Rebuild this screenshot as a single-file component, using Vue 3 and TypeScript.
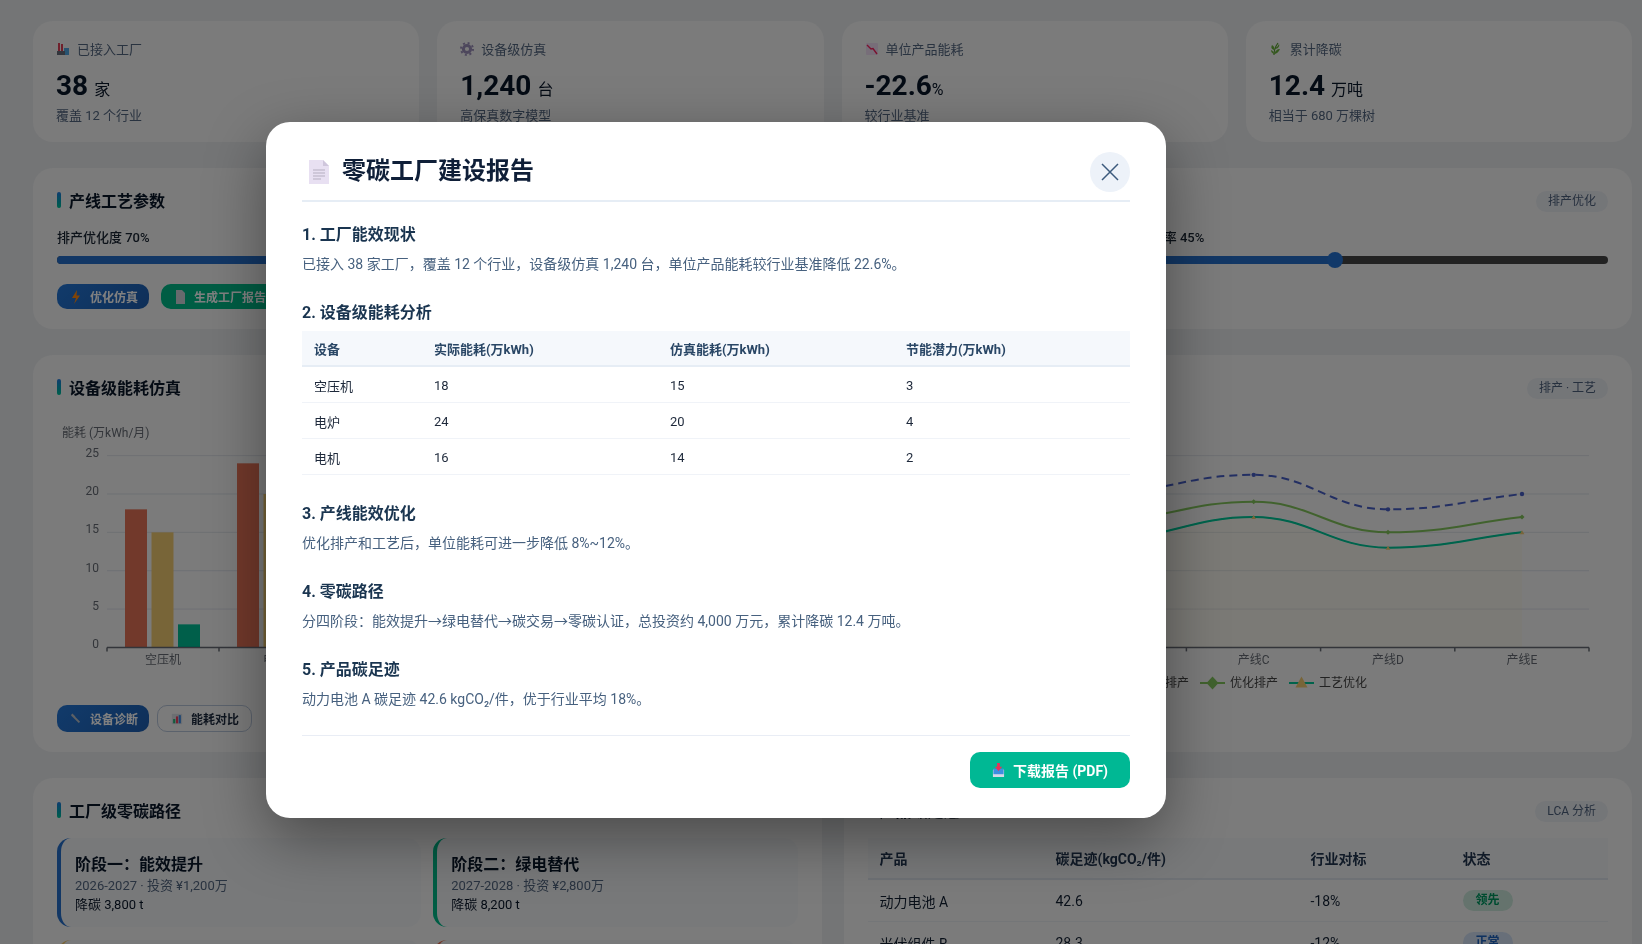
<script setup lang="ts">
interface Stat { label: string; value: string; unit: string; sub: string; icon: string; tight?: boolean }
const stats: Stat[] = [
  { label: '已接入工厂', value: '38', unit: '家', sub: '覆盖 12 个行业', icon: 'factory' },
  { label: '设备级仿真', value: '1,240', unit: '台', sub: '高保真数字模型', icon: 'gear' },
  { label: '单位产品能耗', value: '-22.6', unit: '%', sub: '较行业基准', icon: 'down', tight: true },
  { label: '累计降碳', value: '12.4', unit: '万吨', sub: '相当于 680 万棵树', icon: 'herb' },
]
const sliders = [
  { label: '排产优化度 70%', v: 70 },
  { label: '设备负载率 60%', v: 60 },
  { label: '余热回收率 45%', v: 45 },
]
const yTicks = [0, 5, 10, 15, 20, 25]
const Y0 = 223.4
const UNIT = 7.67
const yOf = (v: number) => Y0 - v * UNIT
const cats = [
  { n: '空压机', v: [18, 15, 3] },
  { n: '电炉', v: [24, 20, 4] },
  { n: '电机', v: [16, 14, 2] },
  { n: '风机', v: [12, 10, 2] },
  { n: '水泵', v: [10, 8, 2] },
  { n: '照明', v: [6, 5, 1] },
]
const barColors = ['#d8745c', '#ecca7c', '#00b894']
const lineNames = ['产线A', '产线B', '产线C', '产线D', '产线E']
const lineX = [117, 251.6, 385.7, 520, 654]
function smooth(vals: number[]): string {
  const pts = vals.map((v, i) => [lineX[i], yOf(v)])
  const slope = pts.map((p, i) => {
    if (i === 0) return (pts[1][1] - p[1]) / (pts[1][0] - p[0])
    if (i === pts.length - 1) return (p[1] - pts[i - 1][1]) / (p[0] - pts[i - 1][0])
    const a = p[1] - pts[i - 1][1]
    const b = pts[i + 1][1] - p[1]
    return a * b <= 0 ? 0 : (pts[i + 1][1] - pts[i - 1][1]) / (pts[i + 1][0] - pts[i - 1][0])
  })
  let d = `M${pts[0][0]} ${pts[0][1]}`
  for (let i = 0; i < pts.length - 1; i++) {
    const dx = (pts[i + 1][0] - pts[i][0]) * 0.42
    d += ` C${pts[i][0] + dx} ${pts[i][1] + slope[i] * dx} ${pts[i + 1][0] - dx} ${pts[i + 1][1] - slope[i + 1] * dx} ${pts[i + 1][0]} ${pts[i + 1][1]}`
  }
  return d
}
const s1 = [18, 20, 22.5, 18, 20]
const s2 = [15, 16.5, 19, 15, 17]
const s3 = [13, 14, 17, 13, 15]
const p1 = smooth(s1)
const p2 = smooth(s2)
const p3 = smooth(s3)
const area = `${p3} L654 ${Y0} L117 ${Y0} Z`
const stages = [
  { t: '阶段一：能效提升', s: '2026-2027 · 投资 ¥1,200万', c: '降碳 3,800 t', k: 'blue' },
  { t: '阶段二：绿电替代', s: '2027-2028 · 投资 ¥2,800万', c: '降碳 8,200 t', k: 'green' },
  { t: '阶段三：碳交易', s: '2028-2029 · 投资 ¥0万', c: '降碳 400 t', k: 'amber' },
  { t: '阶段四：零碳认证', s: '2029-2030', c: '降碳 0 t', k: 'red' },
]
const products = [
  { n: '动力电池 A', f: '42.6', b: '-18%', st: '领先', k: 'lead' },
  { n: '光伏组件 B', f: '28.3', b: '-12%', st: '正常', k: 'norm' },
]
const energy = [
  { n: '空压机', a: 18, s: 15, p: 3 },
  { n: '电炉', a: 24, s: 20, p: 4 },
  { n: '电机', a: 16, s: 14, p: 2 },
]
</script>

<template>
  <div class="page">
    <section class="stats">
      <div v-for="s in stats" :key="s.label" class="card stat">
        <div class="stat-label">
          <svg v-if="s.icon === 'factory'" class="ico" viewBox="0 0 14 14"><rect x="2" y="1" width="2" height="9" fill="#d0455a"/><rect x="5" y="2" width="2" height="8" fill="#d0455a"/><rect x="8" y="6" width="5" height="7" fill="#5aa4d8"/><rect x="1" y="9" width="8" height="4" fill="#666c78"/></svg>
          <svg v-else-if="s.icon === 'gear'" class="ico" viewBox="0 0 14 14"><circle cx="7" cy="7" r="3.6" fill="none" stroke="#9a8fb4" stroke-width="3"/><circle cx="7" cy="7" r="6" fill="none" stroke="#9a8fb4" stroke-width="2" stroke-dasharray="2 2.7"/></svg>
          <svg v-else-if="s.icon === 'down'" class="ico" viewBox="0 0 14 14"><rect x="1" y="1" width="12" height="12" rx="1" fill="#ecdcf0"/><path d="M2 3 L6 7 L8 6.5 L12 12" fill="none" stroke="#e0285a" stroke-width="1.4"/></svg>
          <svg v-else class="ico" viewBox="0 0 14 14"><path d="M5 13 C5 9 6 5 9 1" fill="none" stroke="#5d9a3c" stroke-width="1.2"/><path d="M5 8 C2 7 2 5 3 3 C5 4 6 6 5 8Z M6 6 C8 5 9 4 10 2 C11 4 9 7 6 7Z M5 12 C7 12 10 10 11 7 C8 7 6 9 5 12Z M5 12 C3 11 2 10 2 8 C4 9 5 10 5 12Z" fill="#6fae46"/></svg>
          <span>{{ s.label }}</span>
        </div>
        <div class="stat-value">{{ s.value }}<small :class="{ tight: s.tight }">{{ s.unit }}</small></div>
        <div class="stat-sub">{{ s.sub }}</div>
      </div>
    </section>

    <section class="card params">
      <div class="head">
        <h2 class="title">产线工艺参数</h2>
        <span class="badge">排产优化</span>
      </div>
      <div class="sliders">
        <div v-for="s in sliders" :key="s.label" class="slider">
          <div class="slider-label">{{ s.label }}</div>
          <div class="track">
            <div class="fill" :style="{ width: s.v + '%' }"><i class="thumb"></i></div>
          </div>
        </div>
      </div>
      <div class="actions">
        <button class="btn blue">
          <svg class="ico-s" viewBox="0 0 12 14"><path d="M7 0 L2 8 H6 L4 14 L10 5.5 H6.5Z" fill="#f58a1f"/></svg>优化仿真
        </button>
        <button class="btn green">
          <svg class="ico-s" viewBox="0 0 12 14"><path d="M2 0 H8 L11 3 V14 H2Z" fill="#cfd4da"/></svg>生成工厂报告
        </button>
      </div>
    </section>

    <section class="two">
      <div class="card chart-card">
        <div class="head"><h2 class="title">设备级能耗仿真</h2></div>
        <svg class="chart" viewBox="0 0 741 269" width="741" height="269">
          <text x="5" y="12.5" class="ax">能耗 (万kWh/月)</text>
          <g v-for="t in yTicks" :key="t">
            <line v-if="t" x1="50" :x2="722" :y1="yOf(t)" :y2="yOf(t)" class="grid" />
            <text x="42" :y="yOf(t) + 1" text-anchor="end" class="ax">{{ t }}</text>
          </g>
          <g v-for="(c, i) in cats" :key="c.n">
            <rect v-for="(v, j) in c.v" :key="j" :x="68 + i * 112 + j * 26.5" :y="yOf(v)" width="22" :height="v * UNIT" :fill="barColors[j]" />
            <line :x1="50 + i * 112" :x2="50 + i * 112" :y1="Y0" :y2="Y0 + 4" class="axis" />
            <text :x="106 + i * 112" y="240" text-anchor="middle" class="ax">{{ c.n }}</text>
          </g>
          <line x1="50" x2="722" :y1="Y0" :y2="Y0" class="axis" />
          <line x1="722" x2="722" :y1="Y0" :y2="Y0 + 4" class="axis" />
        </svg>
        <div class="actions">
          <button class="btn blue tall">
            <svg class="ico-s" viewBox="0 0 14 14"><path d="M2 2 L5 5 L11 11 M2 1.5 L5.5 5" fill="none" stroke="#b9bfc6" stroke-width="2.2"/></svg>设备诊断
          </button>
          <button class="btn outline tall">
            <svg class="ico-s" viewBox="0 0 14 14"><rect x="1" y="1" width="12" height="12" fill="#d8dde3"/><rect x="2.5" y="7" width="2.5" height="5" fill="#34b37e"/><rect x="5.8" y="4" width="2.5" height="8" fill="#e0455f"/><rect x="9" y="2.5" width="2.5" height="9.5" fill="#4088d8"/></svg>能耗对比
          </button>
        </div>
      </div>

      <div class="card chart-card">
        <div class="head">
          <h2 class="title">产线能效对比</h2>
          <span class="badge">排产 · 工艺</span>
        </div>
        <svg class="chart" viewBox="0 0 740 269" width="740" height="269">
          <line v-for="t in yTicks.slice(1)" :key="t" x1="50" x2="721" :y1="yOf(t)" :y2="yOf(t)" class="grid" />
          <path :d="area" fill="#ffe08a" fill-opacity="0.08" />
          <path :d="p1" fill="none" stroke="#4a5fb8" stroke-width="2" stroke-dasharray="8 5" />
          <path :d="p2" fill="none" stroke="#88c266" stroke-width="2" />
          <path :d="p3" fill="none" stroke="#00c096" stroke-width="2" />
          <g v-for="(x, i) in lineX" :key="x">
            <circle :cx="x" :cy="yOf(s1[i])" r="2.2" fill="#4a5fb8" />
            <path :d="`M${x} ${yOf(s2[i]) - 2.5} l2.5 2.5 l-2.5 2.5 l-2.5 -2.5Z`" fill="#88c266" />
            <path :d="`M${x} ${yOf(s3[i]) - 2} l2.4 4 h-4.8Z`" fill="#ecca7c" />
            <text :x="x" y="240" text-anchor="middle" class="ax">{{ lineNames[i] }}</text>
          </g>
          <line x1="50" x2="721" :y1="Y0" :y2="Y0" class="axis" />
          <line v-for="i in 6" :key="i" :x1="50 + (i - 1) * 134.2" :x2="50 + (i - 1) * 134.2" :y1="Y0" :y2="Y0 + 4" class="axis" />
          <g class="legend">
            <line x1="243" x2="268" y1="259" y2="259" stroke="#4a5fb8" stroke-width="2" />
            <text x="273" y="263" class="lg">当前排产</text>
            <line x1="332" x2="357" y1="259" y2="259" stroke="#88c266" stroke-width="2" />
            <path d="M344.5 252.5 l6 6.5 l-6 6.5 l-6 -6.5Z" fill="#88c266" />
            <text x="362" y="263" class="lg">优化排产</text>
            <line x1="421" x2="446" y1="259" y2="259" stroke="#00c096" stroke-width="2" />
            <path d="M433.5 252.5 l6 11 h-12Z" fill="#ecca7c" />
            <text x="451" y="263" class="lg">工艺优化</text>
          </g>
        </svg>
      </div>
    </section>

    <section class="two">
      <div class="card">
        <div class="head"><h2 class="title">工厂级零碳路径</h2></div>
        <div class="stages">
          <div v-for="s in stages" :key="s.t" class="stage" :class="s.k">
            <div class="stage-t">{{ s.t }}</div>
            <div class="stage-s">{{ s.s }}</div>
            <div class="stage-c">{{ s.c }}</div>
          </div>
        </div>
      </div>
      <div class="card">
        <div class="head">
          <h2 class="title">产品碳足迹</h2>
          <span class="badge">LCA 分析</span>
        </div>
        <table class="ptable">
          <thead>
            <tr><th class="c1">产品</th><th class="c2">碳足迹(kgCO₂/件)</th><th class="c3">行业对标</th><th>状态</th></tr>
          </thead>
          <tbody>
            <tr v-for="p in products" :key="p.n">
              <td>{{ p.n }}</td><td>{{ p.f }}</td><td>{{ p.b }}</td>
              <td><span class="tag" :class="p.k">{{ p.st }}</span></td>
            </tr>
          </tbody>
        </table>
      </div>
    </section>

    <div class="overlay">
      <div class="modal">
        <header class="m-head">
          <svg class="doc" viewBox="0 0 20 24"><path d="M0 0 H14 L20 6 V24 H0Z" fill="#e8e0f2"/><path d="M14 0 L20 6 H14Z" fill="#cfc6dc"/><path d="M4 10 H16 M4 13 H16 M4 16 H16 M4 19 H12" stroke="#b5aec0" stroke-width="1"/></svg>
          <h1>零碳工厂建设报告</h1>
          <button class="close" aria-label="关闭">
            <svg viewBox="0 0 18 18" width="18" height="18"><path d="M1 1 L17 17 M17 1 L1 17" stroke="#3b5a7d" stroke-width="1.5" fill="none"/></svg>
          </button>
        </header>

        <h3 class="first">1. 工厂能效现状</h3>
        <p>已接入 38 家工厂，覆盖 12 个行业，设备级仿真 1,240 台，单位产品能耗较行业基准降低 22.6%。</p>

        <h3>2. 设备级能耗分析</h3>
        <table class="rtable">
          <thead>
            <tr><th class="w1">设备</th><th>实际能耗(万kWh)</th><th>仿真能耗(万kWh)</th><th>节能潜力(万kWh)</th></tr>
          </thead>
          <tbody>
            <tr v-for="e in energy" :key="e.n"><td>{{ e.n }}</td><td>{{ e.a }}</td><td>{{ e.s }}</td><td>{{ e.p }}</td></tr>
          </tbody>
        </table>

        <h3>3. 产线能效优化</h3>
        <p>优化排产和工艺后，单位能耗可进一步降低 8%~12%。</p>

        <h3>4. 零碳路径</h3>
        <p>分四阶段：能效提升→绿电替代→碳交易→零碳认证，总投资约 4,000 万元，累计降碳 12.4 万吨。</p>

        <h3>5. 产品碳足迹</h3>
        <p>动力电池 A 碳足迹 42.6 kgCO₂/件，优于行业平均 18%。</p>

        <footer class="m-foot">
          <button class="dl">
            <svg class="dl-ico" viewBox="0 0 14 16"><path d="M1 7 H13 V15 H1Z" fill="#d5d8e8"/><path d="M1.5 6 H12.5 V12 H1.5Z" fill="#3d8fe0"/><path d="M5.5 0 H8.5 V4 H11 L7 8.5 L3 4 H5.5Z" fill="#e8305a"/></svg>
            下载报告 (PDF)
          </button>
        </footer>
      </div>
    </div>
  </div>
</template>

<style>
html, body { margin: 0; height: 100%; overflow: hidden; background: #e9eaec; }
</style>

<style scoped>
* { box-sizing: border-box; }
.page {
  height: 944px;
  overflow: hidden;
  padding: 21px 10px 0 33px;
  background: #e9eaec;
  font-family: Roboto, "Noto Sans CJK SC", sans-serif;
  color: #1e293b;
  display: flex;
  flex-direction: column;
  gap: 26px;
}
.card {
  background: #f6f6f6;
  border-radius: 20px;
  padding: 21px 24px 20px;
  flex: none;
}
.stats { display: grid; grid-template-columns: repeat(4, 1fr); gap: 18px; }
.stat { height: 121px; padding: 21px 23px 0; }
.stat-label { display: flex; align-items: center; gap: 7px; font-size: 13px; line-height: 13px; color: #55657c; }
.ico { width: 14px; height: 14px; flex: none; }
.stat-value { margin-top: 13px; font-size: 28px; line-height: 34px; font-weight: 700; color: #0a1526; }
.stat-value small { font-size: 16px; font-weight: 400; margin-left: 6px; }
.stat-value small.tight { margin-left: 0; }
.stat-sub { margin-top: 0; font-size: 13px; line-height: 18px; color: #55657c; }
.head { display: flex; align-items: center; justify-content: space-between; height: 22px; }
.title {
  margin: 0;
  font-size: 16px;
  font-weight: 700;
  color: #0a1526;
  display: flex;
  align-items: center;
  gap: 8px;
}
.title::before {
  content: "";
  width: 4px;
  height: 16px;
  border-radius: 2px;
  background: linear-gradient(180deg, #2a78d0, #00b894);
}
.badge { margin-top: 3px; font-size: 12px; line-height: 21px; padding: 0 12px; border-radius: 11px; background: #e9ebf0; color: #4f6078; }
.sliders { display: grid; grid-template-columns: repeat(3, 1fr); gap: 31px; margin-top: 18px; }
.slider-label { font-size: 13px; line-height: 18px; font-weight: 500; color: #1a2330; }
.track { margin-top: 9px; height: 8px; border-radius: 4px; background: #444; }
.fill { position: relative; height: 100%; border-radius: 4px; background: #2c6cbc; }
.thumb { position: absolute; right: -8px; top: -4px; width: 16px; height: 16px; border-radius: 50%; background: #2c70c4; }
.actions { display: flex; gap: 12px; margin-top: 20px; }
.btn {
  display: inline-flex;
  align-items: center;
  justify-content: center;
  gap: 8px;
  height: 25px;
  padding: 0 11px 0 13px;
  border: 0;
  border-radius: 10px;
  font: 700 12px Roboto, "Noto Sans CJK SC", sans-serif;
  color: #fff;
}
.btn.tall { height: 27px; }
.btn.blue { background: linear-gradient(135deg, #2c74c8, #245ca4); }
.btn.green { background: #00b488; }
.btn.outline { background: #f6f6f6; border: 1px solid #b8c3d6; color: #1e293b; padding: 0 12px 0 13px; }
.ico-s { width: 12px; height: 14px; flex: none; }
.two { display: grid; grid-template-columns: repeat(2, 1fr); gap: 22px; }
.chart-card { height: 397px; }
.chart { display: block; margin-top: 26px; }
.chart-card .actions { margin-top: 12px; gap: 8px; }
.ax { font-size: 12px; fill: #666a72; }
.lg { font-size: 12px; fill: #444; }
.grid { stroke: #dcdfe6; stroke-width: 1; }
.axis { stroke: #666a72; stroke-width: 1.5; }
.stages { display: grid; grid-template-columns: repeat(2, 1fr); gap: 13px 12px; margin-top: 17px; }
.stage {
  height: 89px;
  padding: 17px 14px 0;
  border-radius: 14px;
  border-left: 4px solid;
  background: #f1f2f4;
}
.stage.blue { border-color: #2c6cbc; }
.stage.green { border-color: #00b488; }
.stage.amber { border-color: #ecca7c; }
.stage.red { border-color: #d8745c; }
.stage-t { font-size: 16px; line-height: 20px; font-weight: 700; color: #0a1526; }
.stage-s { font-size: 13px; line-height: 20px; color: #55657c; margin-top: 1px; }
.stage-c { font-size: 13px; line-height: 18px; color: #0a1526; }
.ptable { width: 100%; margin-top: 17px; border-spacing: 0; font-size: 14px; }
.ptable th { height: 42px; padding: 0 12px; text-align: left; background: #f1f2f4; border-bottom: 2px solid #dde1e9; color: #24354c; font-weight: 700; }
.ptable td { height: 42px; padding: 0 12px; border-bottom: 1px solid #e9ebf0; color: #141f30; }
.c1 { width: 176px; }
.c2 { width: 255px; }
.c3 { width: 152px; }
.tag { display: inline-block; padding: 0 13px; font-size: 12px; line-height: 21px; font-weight: 700; border-radius: 11px; }
.tag.lead { background: #cde6da; color: #00905f; }
.tag.norm { background: #d2deef; color: #2460b0; }

.overlay {
  position: fixed;
  inset: 0;
  display: flex;
  align-items: flex-start;
  padding: 122px 0 0 266px;
  -webkit-backdrop-filter: blur(0.6px) brightness(0.5) saturate(1.15);
  backdrop-filter: blur(0.6px) brightness(0.5) saturate(1.15);
}
.modal {
  width: 900px;
  height: 695.5px;
  padding: 30px 36px;
  background: #fff;
  border-radius: 24px;
  box-shadow: 0 20px 60px rgba(0, 0, 0, 0.4);
  color: #47617f;
}
.m-head { display: flex; align-items: center; height: 50px; padding-bottom: 8px; border-bottom: 2px solid #e6edf5; gap: 13px; padding-left: 7px; }
.doc { width: 20px; height: 24px; flex: none; }
.m-head h1 { margin: 0 0 2px; flex: 1; font-size: 24px; font-weight: 700; color: #0f1f38; line-height: 38px; }
.close { width: 40px; height: 40px; border: 0; border-radius: 50%; background: #edf2f9; display: flex; align-items: center; justify-content: center; padding: 0; }
h3 { margin: 27px 0 0; font-size: 16px; line-height: 22px; font-weight: 700; color: #1a3550; }
h3.first { margin-top: 22px; }
p { margin: 7px 0 0; font-size: 14px; line-height: 22px; }
.rtable { width: 100%; margin-top: 7px; border-spacing: 0; font-size: 13px; table-layout: fixed; }
.rtable + h3 { margin-top: 28px; }
.rtable th { height: 36px; padding: 0 12px; text-align: left; background: #f5f8fc; border-bottom: 2px solid #e6edf5; color: #2a4766; font-weight: 700; }
.w1 { width: 120px; }
.rtable td { height: 36px; padding: 2px 12px 0; border-bottom: 1px solid #f0f3f8; color: #1e293b; }
.m-foot { margin-top: 25px; padding-top: 16px; border-top: 1px solid #e9edf5; display: flex; justify-content: flex-end; }
.dl {
  width: 160px;
  height: 36px;
  border: 0;
  border-radius: 10px;
  background: #00b894;
  color: #fff;
  font: 700 14px Roboto, "Noto Sans CJK SC", sans-serif;
  display: flex;
  align-items: center;
  justify-content: center;
  gap: 8px;
}
.dl-ico { width: 13px; height: 15px; flex: none; }
</style>
